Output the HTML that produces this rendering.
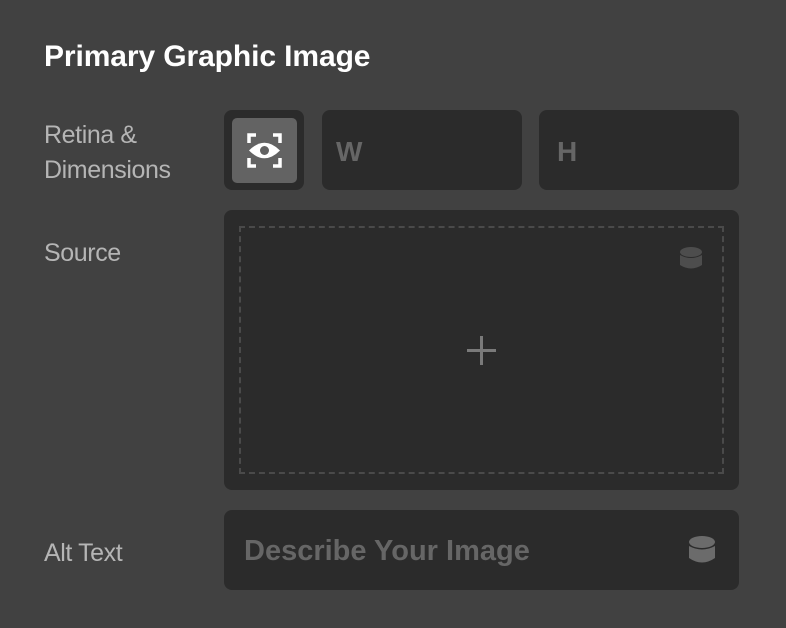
<!DOCTYPE html>
<html><head><style>
*{margin:0;padding:0;box-sizing:border-box}
body{width:786px;height:628px;background:#414141;font-family:"Liberation Sans",sans-serif;position:relative;overflow:hidden}
.a{position:absolute}
.t{left:44px;top:40px;font-size:30px;font-weight:bold;color:#fff;white-space:nowrap;letter-spacing:-0.1px}
.l{left:44px;font-size:25px;color:#b5b5b5;line-height:35px;letter-spacing:-0.4px}
.f{background:#2b2b2b;border-radius:8px}
.ph{font-weight:bold;color:#666;font-size:28px;white-space:nowrap}
</style></head><body>
<div class="a t">Primary Graphic Image</div>
<div class="a l" style="top:118px">Retina &amp;<br>Dimensions</div>
<div class="a l" style="top:236px">Source</div>
<div class="a l" style="top:536px">Alt Text</div>

<div class="a f" style="left:224px;top:110px;width:80px;height:80px"></div>
<div class="a" style="left:232px;top:118px;width:65px;height:65px;background:#636363;border-radius:5px">
<svg width="65" height="65" viewBox="0 0 65 65" style="position:absolute;left:0;top:0">
<g stroke="#fff" stroke-width="3.5" fill="none">
<path d="M17 25V17h7M41 17h7v8M48 40v8h-7M24 48h-7v-8"/>
</g>
<path d="M17 32.5Q32.5 17 48 32.5Q32.5 48 17 32.5Z" fill="#fff"/>
<circle cx="32.5" cy="32.5" r="4.5" fill="#636363"/>
</svg></div>
<div class="a f" style="left:322px;top:110px;width:200px;height:80px"><span class="a ph" style="left:14px;top:26px">W</span></div>
<div class="a f" style="left:539px;top:110px;width:200px;height:80px"><span class="a ph" style="left:18px;top:26px">H</span></div>

<div class="a f" style="left:224px;top:210px;width:515px;height:280px"></div>
<div class="a" style="left:239px;top:226px;width:485px;height:248px;border:2px dashed #4a4a4a"></div>
<svg class="a" style="left:466px;top:335px" width="31" height="31"><path d="M15.5 1v29M1 15.5h29" stroke="#7a7a7a" stroke-width="3"/></svg>
<svg class="a" style="left:679px;top:245px" width="24" height="26"><ellipse cx="12" cy="7" rx="11" ry="5" fill="#4d4d4d"/><path d="M1 10Q12 16 23 10V20Q12 27 1 20Z" fill="#4d4d4d"/></svg>

<div class="a f" style="left:224px;top:510px;width:515px;height:80px"><span class="a ph" style="left:20px;top:25px;font-size:29px">Describe Your Image</span></div>
<svg class="a" style="left:688px;top:535px" width="28" height="30"><ellipse cx="14" cy="7" rx="13" ry="6" fill="#6b6b6b"/><path d="M1 11Q14 18 27 11V23Q14 32 1 23Z" fill="#6b6b6b"/></svg>
</body></html>
